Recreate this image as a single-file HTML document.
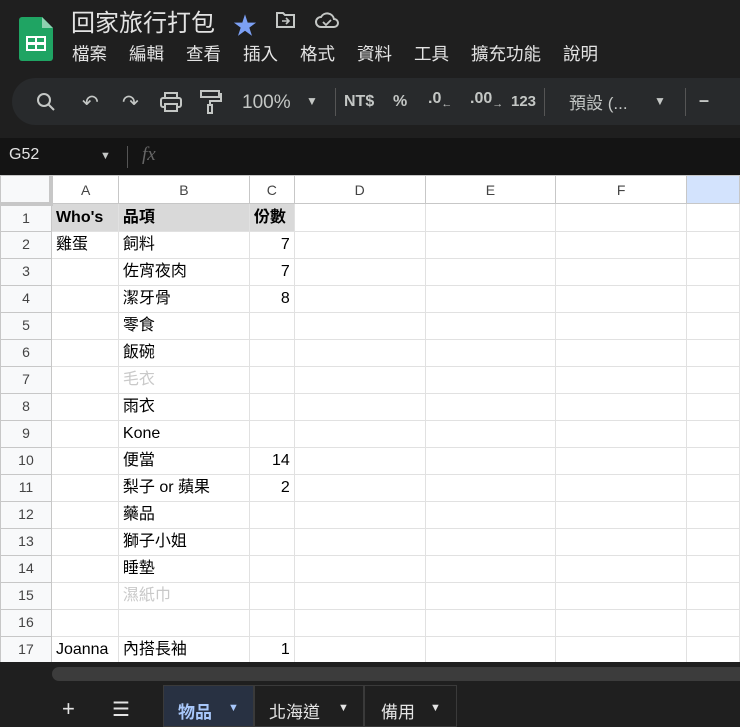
<!DOCTYPE html>
<html><head><meta charset="utf-8"><style>
*{margin:0;padding:0;box-sizing:border-box}
body{width:740px;height:727px;overflow:hidden;background:#1f1f1f;font-family:"Liberation Sans","Noto Sans CJK TC",sans-serif;position:relative}
.abs{position:absolute}
.menu span{margin-right:22px}
.tb{color:#c4c7c5;font-size:17px;font-weight:bold}
.wrap{position:absolute;left:0;top:175px;width:740px;height:487px;overflow:hidden;background:#fff}
table{border-collapse:collapse;background:#fff;table-layout:fixed}
td{border:1px solid #e1e1e1;height:27px;line-height:25px;font-size:16px;color:#000;padding:0 4px;white-space:nowrap;overflow:hidden;vertical-align:middle}
td.rh{background:#f8f9fa;color:#444;text-align:center;font-size:14px;border-color:#c7c7c7}
tr.ch td{height:28px;line-height:24px;background:#fff;color:#444;text-align:center;font-size:14px;border-color:#c7c7c7}
.n{text-align:right}
.g{color:#c9c9c9}
.h td.x{background:#d9d9d9;font-weight:bold}
</style></head><body>
<svg class="abs" style="left:19px;top:17px" width="34" height="44"><path d="M0 3a3 3 0 0 1 3-3h20l11 11v30a3 3 0 0 1-3 3H3a3 3 0 0 1-3-3z" fill="#1fa463"/><path d="M23 0v11h11z" fill="#8ed1b1"/><rect x="7" y="19" width="20" height="15" fill="#fff"/><rect x="9" y="21" width="7" height="4" fill="#1fa463"/><rect x="18" y="21" width="7" height="4" fill="#1fa463"/><rect x="9" y="28" width="7" height="4" fill="#1fa463"/><rect x="18" y="28" width="7" height="4" fill="#1fa463"/></svg>
<div class="abs" style="left:71px;top:3px;color:#e3e3e3;font-size:24px">回家旅行打包</div>
<div class="abs" style="left:233px;top:6px;color:#7ca0f4;font-size:24px">★</div>
<svg class="abs" style="left:275px;top:11px" width="22" height="18"><path d="M2 2h6l2 2h9v12H2z" fill="none" stroke="#c4c7c5" stroke-width="2"/><path d="M7 10h7M11 7l3 3-3 3" stroke="#c4c7c5" fill="none" stroke-width="1.6"/></svg>
<svg class="abs" style="left:314px;top:10px" width="26" height="20"><path d="M7 17a5 5 0 0 1 0-10 7 7 0 0 1 13 2 4 4 0 0 1 0 8z" fill="none" stroke="#c4c7c5" stroke-width="2"/><path d="M9 12l3 3 5-5" fill="none" stroke="#c4c7c5" stroke-width="1.8"/></svg>
<div class="abs menu" style="left:72px;top:41px;color:#e3e3e3;font-size:17.5px;white-space:nowrap"><span>檔案</span><span>編輯</span><span>查看</span><span>插入</span><span>格式</span><span>資料</span><span>工具</span><span>擴充功能</span><span>說明</span></div>
<div class="abs" style="left:12px;top:78px;width:760px;height:47px;border-radius:24px;background:#282a2c"></div>
<svg class="abs" style="left:36px;top:92px" width="20" height="20"><circle cx="8" cy="8" r="6" fill="none" stroke="#c4c7c5" stroke-width="2"/><path d="M12 12l6 6" stroke="#c4c7c5" stroke-width="2"/></svg>
<div class="abs tb" style="left:82px;top:90px;font-weight:normal;font-size:20px">↶</div>
<div class="abs tb" style="left:122px;top:90px;font-weight:normal;font-size:20px">↷</div>
<svg class="abs" style="left:160px;top:92px" width="22" height="20"><rect x="5" y="1" width="12" height="5" fill="none" stroke="#c4c7c5" stroke-width="2"/><rect x="1" y="6" width="20" height="9" rx="2" fill="none" stroke="#c4c7c5" stroke-width="2"/><rect x="5" y="12" width="12" height="7" fill="#282a2c" stroke="#c4c7c5" stroke-width="2"/></svg>
<svg class="abs" style="left:200px;top:90px" width="22" height="24"><rect x="1" y="1" width="18" height="6" fill="none" stroke="#c4c7c5" stroke-width="2"/><path d="M19 4h2v7H10v4" fill="none" stroke="#c4c7c5" stroke-width="2"/><rect x="8" y="15" width="4" height="8" fill="none" stroke="#c4c7c5" stroke-width="2"/></svg>
<div class="abs tb" style="left:242px;top:92px;font-weight:normal;font-size:19px">100%</div>
<div class="abs tb" style="left:306px;top:94px;font-size:12px">▼</div>
<div class="abs" style="left:335px;top:88px;width:1px;height:28px;background:#555"></div>
<div class="abs tb" style="left:344px;top:93px;font-size:16px">NT$</div>
<div class="abs tb" style="left:393px;top:93px;font-size:16px">%</div>
<div class="abs tb" style="left:428px;top:90px;font-size:16px">.0<sub style="font-size:11px">←</sub></div>
<div class="abs tb" style="left:470px;top:90px;font-size:16px">.00<sub style="font-size:11px">→</sub></div>
<div class="abs tb" style="left:511px;top:93px;font-size:15px">123</div>
<div class="abs" style="left:544px;top:88px;width:1px;height:28px;background:#555"></div>
<div class="abs tb" style="left:569px;top:89px;font-weight:normal;font-size:17px">預設 (...</div>
<div class="abs tb" style="left:654px;top:94px;font-size:12px">▼</div>
<div class="abs" style="left:685px;top:88px;width:1px;height:28px;background:#555"></div>
<div class="abs tb" style="left:699px;top:90px;font-size:18px">–</div>
<div class="abs" style="left:0;top:138px;width:740px;height:37px;background:#141414"></div>
<div class="abs" style="left:9px;top:146px;color:#e3e3e3;font-size:16px">G52</div>
<div class="abs" style="left:100px;top:150px;color:#c4c7c5;font-size:11px">▼</div>
<div class="abs" style="left:127px;top:146px;width:1px;height:22px;background:#555"></div>
<div class="abs" style="left:142px;top:144px;color:#666;font-size:19px;font-style:italic;font-family:'Liberation Serif',serif">fx</div>
<div class="wrap"><table>
<colgroup><col style="width:51px"><col style="width:67px"><col style="width:131px"><col style="width:45px"><col style="width:131px"><col style="width:131px"><col style="width:131px"><col style="width:53px"></colgroup>
<tr class="ch"><td style="background:#f8f9fa;border-right:4px solid #c7c7c7;border-bottom:4px solid #c7c7c7"></td><td>A</td><td>B</td><td>C</td><td>D</td><td>E</td><td>F</td><td style="background:#d3e3fd"></td></tr>
<tr class="h"><td class="rh">1</td><td class="x">Who's</td><td class="x">品項</td><td class="x">份數</td><td></td><td></td><td></td><td></td></tr>
<tr><td class="rh">2</td><td>雞蛋</td><td>飼料</td><td class="n">7</td><td></td><td></td><td></td><td></td></tr>
<tr><td class="rh">3</td><td></td><td>佐宵夜肉</td><td class="n">7</td><td></td><td></td><td></td><td></td></tr>
<tr><td class="rh">4</td><td></td><td>潔牙骨</td><td class="n">8</td><td></td><td></td><td></td><td></td></tr>
<tr><td class="rh">5</td><td></td><td>零食</td><td></td><td></td><td></td><td></td><td></td></tr>
<tr><td class="rh">6</td><td></td><td>飯碗</td><td></td><td></td><td></td><td></td><td></td></tr>
<tr><td class="rh">7</td><td></td><td class="g">毛衣</td><td></td><td></td><td></td><td></td><td></td></tr>
<tr><td class="rh">8</td><td></td><td>雨衣</td><td></td><td></td><td></td><td></td><td></td></tr>
<tr><td class="rh">9</td><td></td><td>Kone</td><td></td><td></td><td></td><td></td><td></td></tr>
<tr><td class="rh">10</td><td></td><td>便當</td><td class="n">14</td><td></td><td></td><td></td><td></td></tr>
<tr><td class="rh">11</td><td></td><td>梨子 or 蘋果</td><td class="n">2</td><td></td><td></td><td></td><td></td></tr>
<tr><td class="rh">12</td><td></td><td>藥品</td><td></td><td></td><td></td><td></td><td></td></tr>
<tr><td class="rh">13</td><td></td><td>獅子小姐</td><td></td><td></td><td></td><td></td><td></td></tr>
<tr><td class="rh">14</td><td></td><td>睡墊</td><td></td><td></td><td></td><td></td><td></td></tr>
<tr><td class="rh">15</td><td></td><td class="g">濕紙巾</td><td></td><td></td><td></td><td></td><td></td></tr>
<tr><td class="rh">16</td><td></td><td></td><td></td><td></td><td></td><td></td><td></td></tr>
<tr><td class="rh">17</td><td>Joanna</td><td>內搭長袖</td><td class="n">1</td><td></td><td></td><td></td><td></td></tr>
<tr><td class="rh">18</td><td></td><td></td><td></td><td></td><td></td><td></td><td></td></tr>
</table></div>
<div class="abs" style="left:0;top:662px;width:740px;height:23px;background:#1f1f1f"></div>
<div class="abs" style="left:52px;top:667px;width:700px;height:14px;border-radius:7px;background:#3c3c3c"></div>
<div class="abs" style="left:0;top:685px;width:740px;height:42px;background:#1f1f1f"></div>
<div class="abs" style="left:62px;top:696px;color:#e3e3e3;font-size:22px">+</div>
<div class="abs" style="left:112px;top:697px;color:#e3e3e3;font-size:20px">☰</div>
<div class="abs" style="left:163px;top:685px;width:91px;height:42px;background:#283142;border:1px solid #3a3a3a"></div>
<div class="abs" style="left:178px;top:698px;color:#a8c7fa;font-size:17px;font-weight:bold">物品</div>
<div class="abs" style="left:228px;top:702px;color:#a8c7fa;font-size:11px">▼</div>
<div class="abs" style="left:254px;top:685px;width:110px;height:42px;border:1px solid #3a3a3a"></div>
<div class="abs" style="left:269px;top:698px;color:#e3e3e3;font-size:17px">北海道</div>
<div class="abs" style="left:338px;top:702px;color:#e3e3e3;font-size:11px">▼</div>
<div class="abs" style="left:364px;top:685px;width:93px;height:42px;border:1px solid #3a3a3a"></div>
<div class="abs" style="left:381px;top:698px;color:#e3e3e3;font-size:17px">備用</div>
<div class="abs" style="left:430px;top:702px;color:#e3e3e3;font-size:11px">▼</div>
</body></html>
